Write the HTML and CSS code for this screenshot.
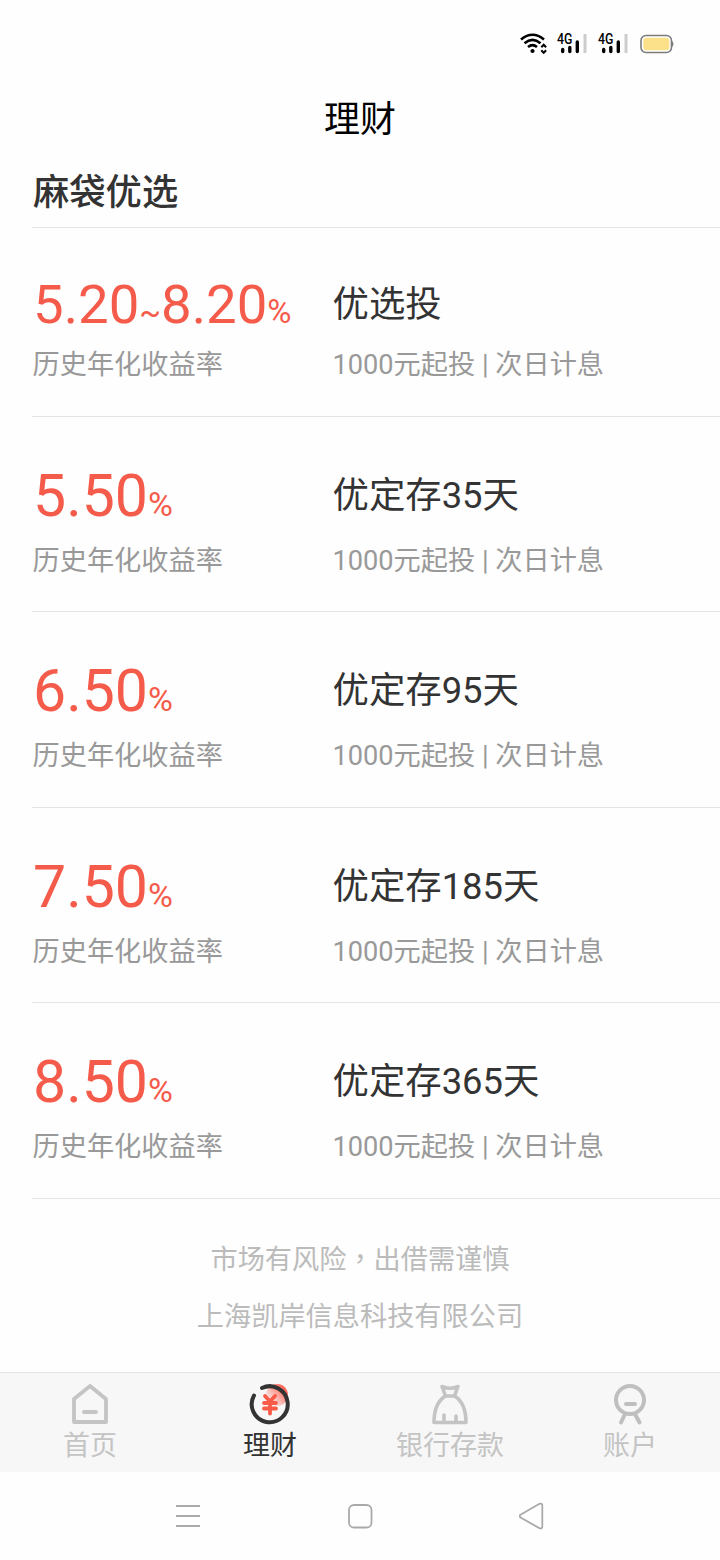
FILE: index.html
```html
<!DOCTYPE html>
<html lang="zh-CN">

<head>
    <meta charset="UTF-8">
    <meta name="viewport" content="width=device-width, initial-scale=1.0">
    <title>理财</title>
    <link rel="stylesheet" href="styles.css">
</head>

<body>
    <div class="status-bar">
        <svg class="wifi" width="28" height="22" viewBox="0 0 28 22" fill="none" stroke="#000" stroke-width="2.600">
            <path d="M1 6.500Q12.500 -3 24 6.500M4.500 10.300Q12.500 3.600 20.500 10.300M8 14Q12.500 10.200 17 14" />
            <circle cx="12.500" cy="18" r="2.100" fill="#000" stroke="none" />
            <path d="M21.300 14.300L23.700 11.700L26.100 14.300M21.300 17.300L23.700 19.900L26.100 17.300" stroke-width="2" />
        </svg>
        <div class="signal">
            <span class="net">4G</span>
            <svg width="30" height="22" viewBox="0 0 30 22" stroke-width="3.400" stroke-linecap="round">
                <path d="M5.700 16.500V18.500M12.800 14.500V18.500M20.300 9V18.500" stroke="#000" />
                <path d="M28 1V20" stroke="#ccc" stroke-linecap="butt" stroke-width="3" />
            </svg>
        </div>
        <div class="signal">
            <span class="net">4G</span>
            <svg width="30" height="22" viewBox="0 0 30 22" stroke-width="3.400" stroke-linecap="round">
                <path d="M5.700 16.500V18.500M12.800 14.500V18.500M20.300 9V18.500" stroke="#000" />
                <path d="M28 1V20" stroke="#ccc" stroke-linecap="butt" stroke-width="3" />
            </svg>
        </div>
        <svg class="battery" width="34" height="20" viewBox="0 0 34 20">
            <rect x="1" y="1.500" width="30.500" height="17" rx="5" fill="#fff" stroke="#7c7c7c" stroke-width="1.600" />
            <rect x="3.300" y="3.700" width="26" height="12.600" rx="3" fill="#fce08a" />
            <path d="M32 7Q35 10 32 13Z" fill="#7c7c7c" />
        </svg>
    </div>

    <h1 class="page-title">理财</h1>

    <main class="content">
        <h2 class="section-title">麻袋优选</h2>

        <div class="product product-range">
            <div class="rate-col">
                <div class="rate">5.20<span class="tilde">~</span>8.20<span class="percent">%</span></div>
                <div class="label">历史年化收益率</div>
            </div>
            <div class="info-col">
                <div class="name">优选投</div>
                <div class="label">1000元起投 | 次日计息</div>
            </div>
        </div>

        <div class="product">
            <div class="rate-col">
                <div class="rate">5.50<span class="percent">%</span></div>
                <div class="label">历史年化收益率</div>
            </div>
            <div class="info-col">
                <div class="name">优定存35天</div>
                <div class="label">1000元起投 | 次日计息</div>
            </div>
        </div>

        <div class="product">
            <div class="rate-col">
                <div class="rate">6.50<span class="percent">%</span></div>
                <div class="label">历史年化收益率</div>
            </div>
            <div class="info-col">
                <div class="name">优定存95天</div>
                <div class="label">1000元起投 | 次日计息</div>
            </div>
        </div>

        <div class="product">
            <div class="rate-col">
                <div class="rate">7.50<span class="percent">%</span></div>
                <div class="label">历史年化收益率</div>
            </div>
            <div class="info-col">
                <div class="name">优定存185天</div>
                <div class="label">1000元起投 | 次日计息</div>
            </div>
        </div>

        <div class="product">
            <div class="rate-col">
                <div class="rate">8.50<span class="percent">%</span></div>
                <div class="label">历史年化收益率</div>
            </div>
            <div class="info-col">
                <div class="name">优定存365天</div>
                <div class="label">1000元起投 | 次日计息</div>
            </div>
        </div>
    </main>

    <footer class="notice">
        <p>市场有风险<span class="comma" lang="zh-TW">，</span>出借需谨慎</p>
        <p>上海凯岸信息科技有限公司</p>
    </footer>

    <nav class="tab-bar">
        <a class="tab">
            <svg width="44" height="44" viewBox="0 0 44 44" fill="none" stroke="#c4c4c4" stroke-width="3.800" stroke-linejoin="round" stroke-linecap="round">
                <path d="M6 17L22 4L38 17V40H6Z" />
                <path d="M16 30H28" />
            </svg>
            <span>首页</span>
        </a>
        <a class="tab active">
            <svg width="44" height="44" viewBox="0 0 44 44" fill="none" stroke-linecap="round">
                <defs>
                    <linearGradient id="glow" x1="1" y1="0" x2="0.100" y2="0.800">
                        <stop offset="0.150" stop-color="#ff584a" />
                        <stop offset="1" stop-color="#ff584a" stop-opacity="0" />
                    </linearGradient>
                </defs>
                <circle cx="29" cy="13" r="11" fill="url(#glow)" />
                <path d="M14 6A18 18 0 1 1 6 13.500" stroke="#333" stroke-width="4" />
                <path d="M17 14L22 19.500L27 14M16 21H28M16 26.500H28M22 21V31.500" stroke="#fa5a48" stroke-width="3.800" />
            </svg>
            <span>理财</span>
        </a>
        <a class="tab">
            <svg width="44" height="44" viewBox="0 0 44 44" fill="none" stroke="#c4c4c4" stroke-width="3.600" stroke-linejoin="round" stroke-linecap="round">
                <path d="M17.500 14L14 4.500Q22 8 30 4.500L26.500 14Z" />
                <path d="M17.500 14Q6 21 6 40.500H38Q38 21 26.500 14" />
                <path d="M16 33V40M28 34V40" />
            </svg>
            <span>银行存款</span>
        </a>
        <a class="tab">
            <svg width="44" height="44" viewBox="0 0 44 44" fill="none" stroke="#bfbfbf" stroke-width="4" stroke-linecap="round">
                <circle cx="22" cy="18" r="14" />
                <path d="M18 22H27M16.500 33L13 40.500M27.500 33L31.500 40.500" />
            </svg>
            <span>账户</span>
        </a>
    </nav>

    <div class="system-nav">
        <svg width="26" height="28" viewBox="0 0 26 28" fill="none" stroke="#aaa" stroke-width="1.800">
            <path d="M1 4H25M1 14H25M1 24H25" />
        </svg>
        <svg width="26" height="28" viewBox="0 0 26 28" fill="none" stroke="#aaa" stroke-width="1.800">
            <rect x="2" y="3" width="22.500" height="22.500" rx="5" />
        </svg>
        <svg width="26" height="28" viewBox="0 0 26 28" fill="none" stroke="#aaa" stroke-width="1.800" stroke-linejoin="round">
            <path d="M1.500 12.700L20.500 1.800Q23.300 .900 23.300 3.500V24.500Q23.300 27.300 20.500 26.200L1.500 15.500Q0 14.100 1.500 12.700Z" />
        </svg>
    </div>
</body>

</html>
```
FILE: styles.css
```css
* {
    box-sizing: border-box;
}

body {
    margin: 0;
    width: 720px;
    height: 1560px;
    display: flex;
    flex-direction: column;
    overflow: hidden;
    background: #fefefe;
    color: #333;
    font-family: Roboto, "Noto Sans CJK SC", sans-serif;
}

.status-bar {
    height: 88px;
    padding-right: 46px;
    display: flex;
    justify-content: flex-end;
    align-items: center;
}

.signal {
    position: relative;
    height: 22px;
}

.net {
    position: absolute;
    top: -1px;
    left: 0;
    color: #000;
    font-size: 14px;
    font-weight: 500;
    line-height: 14px;
    transform: scaleX(0.880);
    transform-origin: left;
}

.wifi {
    margin-right: 9px;
}

.signal + .signal {
    margin-left: 11px;
}

.battery {
    margin-left: 12px;
}

.page-title {
    margin: 0;
    height: 60px;
    color: #000;
    font-size: 36px;
    font-weight: 400;
    line-height: 64px;
    text-align: center;
}

.content {
    margin-left: 32px;
}

.section-title {
    margin: 0;
    padding-left: 1px;
    height: 80px;
    border-bottom: 1px solid #e4e4e4;
    font-size: 36.300px;
    font-weight: 500;
    line-height: 90px;
}

.product {
    height: 195.400px;
    padding-top: 49px;
    display: flex;
    border-bottom: 1px solid #e4e4e4;
}

.product-range {
    height: 189px;
    padding-top: 47px;
}

.rate-col {
    width: 300px;
}

.rate {
    height: 65px;
    padding-left: 1px;
    color: #f55b4a;
    font-size: 59px;
    line-height: 60px;
    white-space: nowrap;
}

.product-range .rate {
    height: 60px;
    font-size: 54.500px;
    line-height: 59px;
}

.tilde {
    font-size: 32px;
}

.percent {
    font-size: 34px;
}

.product-range .percent {
    font-size: 33px;
}

.name {
    height: 65px;
    padding-left: 0.500px;
    font-size: 36.400px;
    line-height: 60px;
}

.product-range .name {
    height: 60px;
}

.label {
    padding-left: 0.500px;
    color: #999;
    font-size: 27.200px;
    line-height: 61px;
    white-space: nowrap;
}

.notice {
    padding-top: 30px;
    color: #bbb;
    font-size: 27.200px;
    line-height: 57px;
    text-align: center;
}

.notice p {
    margin: 0;
}

.comma {
    font-family: "Noto Sans CJK TC", sans-serif;
}

.tab-bar {
    margin-top: auto;
    height: 100px;
    padding-top: 9px;
    display: flex;
    border-top: 1px solid #e4e4e4;
    background: #f7f7f7;
}

.tab {
    flex: 1;
    display: flex;
    flex-direction: column;
    align-items: center;
    color: #c4c4c4;
    font-size: 27px;
    line-height: 40px;
}

.active {
    color: #333;
}

.system-nav {
    height: 88px;
    padding: 0 175px;
    display: flex;
    justify-content: space-between;
    align-items: center;
}
```
